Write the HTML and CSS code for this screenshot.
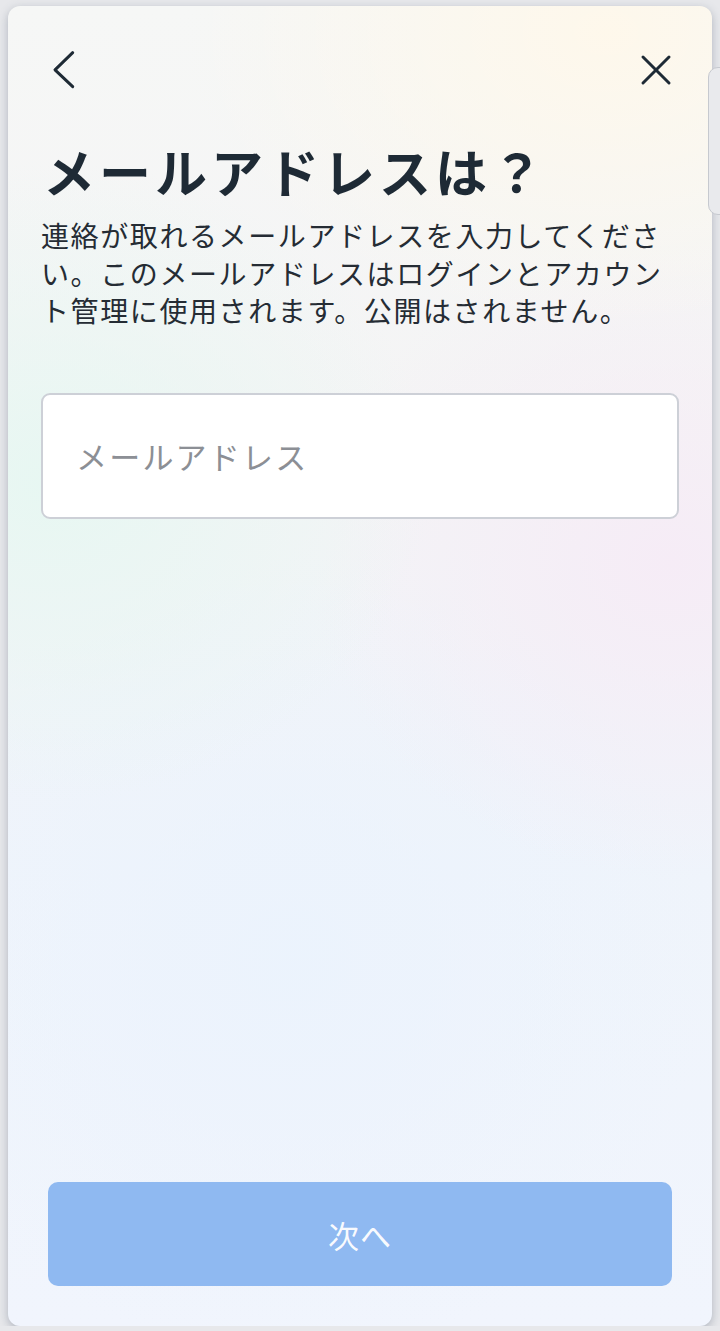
FILE: index.html
```html
<!DOCTYPE html>
<html lang="ja">
<head>
  <meta charset="UTF-8" />
  <meta name="viewport" content="width=device-width, initial-scale=1.0"/>
  <title>メールアドレス登録</title>
  <link rel="stylesheet" href="styles.css">
</head>
<body>
  <div class="side-tab"></div>
  <div class="sheet">
    <div class="topbar">
      <a class="icon-btn" href="#" aria-label="戻る">
        <svg class="icon-back" width="24" height="40" viewBox="0 0 24 40">
          <polyline points="20.7,2.7 3,19.8 20.7,36.7" />
        </svg>
      </a>
      <a class="icon-btn" href="#" aria-label="閉じる">
        <svg class="icon-close" width="32" height="32" viewBox="0 0 32 32">
          <line x1="3" y1="3" x2="29" y2="29" />
          <line x1="29" y1="3" x2="3" y2="29" />
        </svg>
      </a>
    </div>

    <h1 class="title">メールアドレスは？</h1>
    <p class="lead">連絡が取れるメールアドレスを入力してください。このメールアドレスはログインとアカウント管理に使用されます。公開はされません。</p>

    <input class="email-input" type="email" placeholder="メールアドレス">

    <div class="spacer"></div>

    <button class="next-btn" disabled>次へ</button>
  </div>
</body>
</html>
```

FILE: styles.css
```css
body {
  margin: 0;
  background-color: #e7e8eb;
  font-family: "Noto Sans CJK JP", "Noto Sans", sans-serif;
  color: #1e2a35;
}
.side-tab {
  position: absolute;
  z-index: 2;
  left: 708px;
  top: 67px;
  width: 24px;
  height: 146px;
  background: #e9eaed;
  border: 1px solid #c6c9cf;
  border-radius: 10px;
}
.sheet {
  position: relative;
  margin: 6px 8px 0;
  height: 1320px;
  border-radius: 12px;
  box-shadow: 0 3px 10px rgba(70, 82, 105, 0.35);
  display: flex;
  flex-direction: column;
  overflow: hidden;
  background-color: #f0f4fc;
  background-image:
    radial-gradient(ellipse 420px 300px at 85% 2%, rgba(255, 248, 234, 0.9), rgba(255, 248, 234, 0)),
    radial-gradient(ellipse 380px 320px at 6% 36%, rgba(231, 247, 242, 1), rgba(231, 247, 242, 0)),
    radial-gradient(ellipse 360px 320px at 94% 42%, rgba(246, 235, 246, 0.9), rgba(246, 235, 246, 0)),
    radial-gradient(ellipse 420px 400px at 40% 72%, rgba(235, 243, 253, 0.9), rgba(235, 243, 253, 0)),
    linear-gradient(180deg, #f6f7f6 0%, #f4f4f5 35%, #eff4fb 65%, #f1f5fd 100%);
}
.topbar {
  display: flex;
  justify-content: space-between;
  align-items: center;
  padding: 44px 40px 0 44px;
}
.icon-btn {
  display: flex;
}
.icon-btn svg {
  fill: none;
  stroke: #1e2a35;
  stroke-width: 3;
  stroke-linecap: round;
  stroke-linejoin: round;
}
.title {
  margin: 49px 0 0 35px;
  font-size: 52px;
  line-height: 64px;
  font-weight: 700;
  letter-spacing: 4px;
}
.lead {
  margin: 14px 36px 0 33px;
  font-size: 28px;
  line-height: 37.5px;
  letter-spacing: 1.6px;
  color: #252c34;
}
.email-input {
  margin: 63px 33px 0;
  height: 126px;
  box-sizing: border-box;
  padding: 0 33px;
  border: 2px solid #cdd0d7;
  border-radius: 9px;
  background: #fff;
  font-family: inherit;
  font-size: 31px;
  letter-spacing: 2.2px;
  color: #1e2a35;
  outline: none;
}
.email-input::placeholder {
  color: #8c8f95;
}
.spacer {
  flex: 1;
}
.next-btn {
  margin: 0 40px 40px;
  height: 104px;
  border: none;
  border-radius: 10px;
  background-color: #8fb9f1;
  color: rgba(255, 255, 255, 0.95);
  font-family: inherit;
  font-size: 31px;
  letter-spacing: 1px;
}
```
